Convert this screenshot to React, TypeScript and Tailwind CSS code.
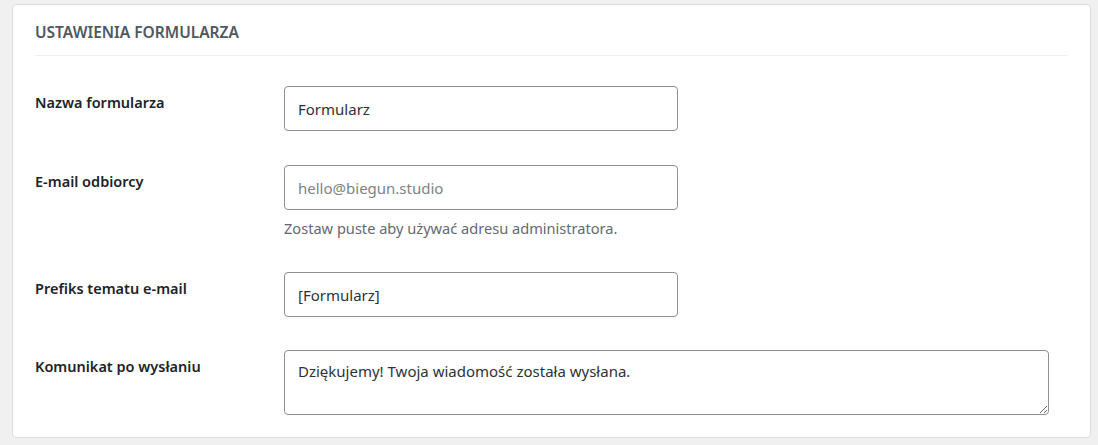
import React from "react";

const font = { fontFamily: '"Noto Sans", "Open Sans", sans-serif' };

function Row({ label, children, className = "" }: { label: string; children: React.ReactNode; className?: string }) {
  return (
    <div className={"flex " + className}>
      <div className="w-[249px] shrink-0 pt-[6px] text-[14.5px] leading-5 font-semibold text-[#1d2327]">{label}</div>
      <div className="flex-1">{children}</div>
    </div>
  );
}

export default function App() {
  return (
    <div className="min-h-screen bg-[#f0f0f1] pt-[4px] pl-[12px] pr-[7px]" style={font}>
      <div className="bg-white border border-[#dcdcde] rounded-[4px] px-[22px] pb-[22px]">
        <h2 className="pt-[17px] pb-[13px] border-b border-[#f0f0f1] text-[15.5px] leading-5 font-semibold uppercase text-[#50575e]">
          Ustawienia formularza
        </h2>

        <div className="flex flex-col gap-[34px] pt-[30px]">
          <Row label="Nazwa formularza">
            <input
              type="text"
              defaultValue="Formularz"
              className="w-[394px] h-[45px] px-[13px] border border-[#8c8f94] rounded-[4px] text-[15px] text-[#2c3338] bg-white outline-none"
            />
          </Row>

          <Row label="E-mail odbiorcy">
            <input
              type="email"
              placeholder="hello@biegun.studio"
              className="w-[394px] h-[45px] px-[13px] border border-[#8c8f94] rounded-[4px] text-[15px] text-[#2c3338] placeholder:text-[#7e8388] bg-white outline-none"
            />
            <p className="mt-[8px] text-[14.6px] leading-5 text-[#646970]">Zostaw puste aby używać adresu administratora.</p>
          </Row>

          <Row label="Prefiks tematu e-mail">
            <input
              type="text"
              defaultValue="[Formularz]"
              className="w-[394px] h-[45px] px-[13px] border border-[#8c8f94] rounded-[4px] text-[15px] text-[#2c3338] bg-white outline-none"
            />
          </Row>

          <Row label="Komunikat po wysłaniu" className="-mt-[1px]">
            <textarea
              defaultValue="Dziękujemy! Twoja wiadomość została wysłana."
              className="block w-[765px] h-[65px] px-[13px] pt-[8px] border border-[#8c8f94] rounded-[4px] text-[15px] leading-6 text-[#2c3338] bg-white outline-none"
            />
          </Row>
        </div>
      </div>
    </div>
  );
}
